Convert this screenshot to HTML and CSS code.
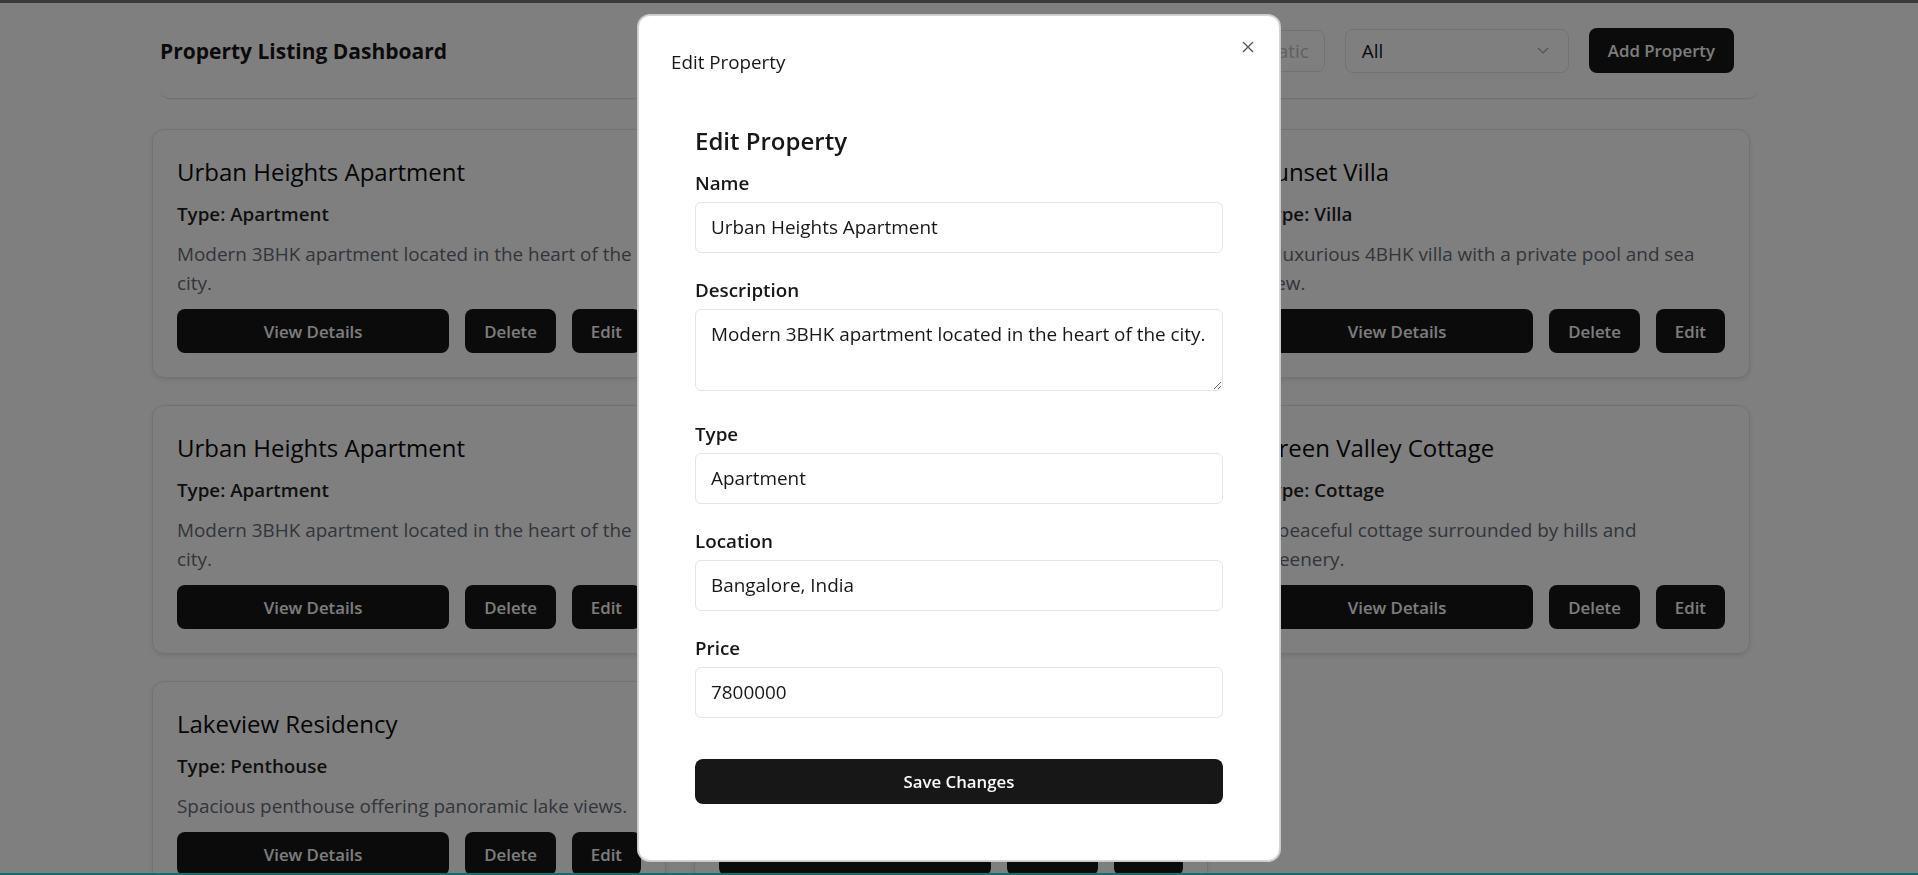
FILE: index.html
```html
<!DOCTYPE html>
<html lang="en">
<head>
<meta charset="utf-8">
<title>Property Listing Dashboard</title>
<link rel="stylesheet" href="styles.css">
</head>
<body>
<div class="page">
  <header class="header">
    <h1 class="header-title">Property Listing Dashboard</h1>
    <div class="controls">
      <input class="search" type="text" placeholder="Sort: Automatic">
      <div class="select">
        <span>All</span>
        <svg class="chevron" width="12" height="7" viewBox="0 0 12 7"><polyline points="1,1 6,6 11,1" fill="none" stroke="#a3a3a3" stroke-width="1.2"/></svg>
      </div>
      <button class="btn btn-add">Add Property</button>
    </div>
  </header>

  <main class="grid">
    <article class="card">
      <h2 class="card-title">Urban Heights Apartment</h2>
      <p class="card-type">Type: Apartment</p>
      <p class="card-desc">Modern 3BHK apartment located in the heart of the city.</p>
      <div class="card-actions"><button class="btn btn-view">View Details</button><button class="btn">Delete</button><button class="btn">Edit</button></div>
    </article>
    <article class="card">
      <h2 class="card-title">Skyline Towers</h2>
      <p class="card-type">Type: Apartment</p>
      <p class="card-desc">Premium 2BHK apartment with a stunning skyline view and modern amenities.</p>
      <div class="card-actions"><button class="btn btn-view">View Details</button><button class="btn">Delete</button><button class="btn">Edit</button></div>
    </article>
    <article class="card">
      <h2 class="card-title">Sunset Villa</h2>
      <p class="card-type">Type: Villa</p>
      <p class="card-desc">A luxurious 4BHK villa with a private pool and sea view.</p>
      <div class="card-actions"><button class="btn btn-view">View Details</button><button class="btn">Delete</button><button class="btn">Edit</button></div>
    </article>
    <article class="card">
      <h2 class="card-title">Urban Heights Apartment</h2>
      <p class="card-type">Type: Apartment</p>
      <p class="card-desc">Modern 3BHK apartment located in the heart of the city.</p>
      <div class="card-actions"><button class="btn btn-view">View Details</button><button class="btn">Delete</button><button class="btn">Edit</button></div>
    </article>
    <article class="card">
      <h2 class="card-title">Palm Grove House</h2>
      <p class="card-type">Type: House</p>
      <p class="card-desc">Independent 3BHK house with a lush garden in a quiet neighbourhood.</p>
      <div class="card-actions"><button class="btn btn-view">View Details</button><button class="btn">Delete</button><button class="btn">Edit</button></div>
    </article>
    <article class="card">
      <h2 class="card-title">Green Valley Cottage</h2>
      <p class="card-type">Type: Cottage</p>
      <p class="card-desc">A peaceful cottage surrounded by hills and<br>greenery.</p>
      <div class="card-actions"><button class="btn btn-view">View Details</button><button class="btn">Delete</button><button class="btn">Edit</button></div>
    </article>
    <article class="card">
      <h2 class="card-title">Lakeview Residency</h2>
      <p class="card-type">Type: Penthouse</p>
      <p class="card-desc">Spacious penthouse offering panoramic lake views.</p>
      <div class="card-actions"><button class="btn btn-view">View Details</button><button class="btn">Delete</button><button class="btn">Edit</button></div>
    </article>
    <article class="card">
      <h2 class="card-title">Metro Studio Loft</h2>
      <p class="card-type">Type: Studio</p>
      <p class="card-desc">Compact studio close to the metro station.</p>
      <div class="card-actions"><button class="btn btn-view">View Details</button><button class="btn">Delete</button><button class="btn">Edit</button></div>
    </article>
  </main>
</div>

<div class="overlay">
  <div class="modal" role="dialog">
    <div class="modal-header">
      <span class="modal-title">Edit Property</span>
    </div>
    <button class="modal-close" aria-label="Close">
      <svg width="12" height="12" viewBox="0 0 12 12"><path d="M1 1 L11 11 M11 1 L1 11" stroke="#525252" stroke-width="1.3" fill="none"/></svg>
    </button>
    <form class="modal-body">
      <h2 class="form-title">Edit Property</h2>
      <label class="field">
        <span class="label">Name</span>
        <input class="input" type="text" value="Urban Heights Apartment">
      </label>
      <label class="field">
        <span class="label">Description</span>
        <textarea class="input textarea">Modern 3BHK apartment located in the heart of the city.</textarea>
      </label>
      <label class="field">
        <span class="label">Type</span>
        <input class="input" type="text" value="Apartment">
      </label>
      <label class="field">
        <span class="label">Location</span>
        <input class="input" type="text" value="Bangalore, India">
      </label>
      <label class="field">
        <span class="label">Price</span>
        <input class="input" type="text" value="7800000">
      </label>
      <button type="button" class="btn btn-save">Save Changes</button>
    </form>
  </div>
</div>

<div class="top-strip"></div>
<div class="bottom-strip"></div>
</body>
</html>
```

FILE: styles.css
```css
* { box-sizing: border-box; }

html, body {
  margin: 0;
  height: 100%;
  overflow: hidden;
  background: #ffffff;
  font-family: "Open Sans", "Noto Sans", sans-serif;
  color: #171717;
}

.page {
  width: 1598px;
  margin: 0 auto;
  padding-top: 4px;
}

/* Header */
.header {
  display: flex;
  align-items: center;
  justify-content: space-between;
  padding: 24px 24px 25px 0;
  background: #fff;
  border-radius: 10px;
  box-shadow: 0 2px 2px -1px rgba(0,0,0,0.14);
}
.header-title {
  margin: 0;
  font-size: 21px;
  font-weight: 700;
  line-height: 30px;
  color: #171717;
}
.controls {
  display: flex;
  align-items: center;
  gap: 20px;
}
.search {
  width: 220px;
  height: 42px;
  border: 1px solid #e5e5e5;
  border-radius: 8px;
  padding: 0 15px;
  font: inherit;
  font-size: 18.9px;
  text-align: right;
}
.search::placeholder { color: #c2c2c2; }
.select {
  width: 224px;
  height: 44px;
  border: 1px solid #e5e5e5;
  border-radius: 8px;
  padding: 0 19px 0 16px;
  display: flex;
  align-items: center;
  justify-content: space-between;
  font-size: 18.9px;
  color: #171717;
}

/* Buttons */
.btn {
  height: 44px;
  padding: 0 19px;
  border: 0;
  border-radius: 8px;
  background: #171717;
  color: #fafafa;
  font-family: inherit;
  font-size: 16.8px;
  font-weight: 600;
  cursor: pointer;
}
.btn-add { height: 45px; }

/* Cards */
.grid {
  width: 1598px;
  margin: 31px 0 0 -8px;
  display: grid;
  grid-template-columns: repeat(3, 1fr);
  column-gap: 28px;
  row-gap: 27px;
}
.card {
  background: #fff;
  border: 1px solid #e5e5e5;
  border-radius: 12px;
  padding: 24px;
  box-shadow: 0 2px 5px rgba(0,0,0,0.10);
  display: flex;
  flex-direction: column;
}
.card-title {
  margin: 2px 0 13px;
  font-size: 24px;
  line-height: 32px;
  font-weight: 500;
  color: #0a0a0a;
}
.card-type {
  margin: 0 0 12px;
  font-size: 18.8px;
  line-height: 27px;
  font-weight: 600;
  color: #1f1f1f;
}
.card-desc {
  margin: 0 0 11px;
  font-size: 18.9px;
  line-height: 29px;
  color: #656b76;
}
.card-actions {
  display: flex;
  gap: 16px;
}
.btn-view { flex: 1; }

/* Overlay + modal */
.overlay {
  position: fixed;
  inset: 0;
  background: rgba(0,0,0,0.5);
  display: flex;
  align-items: center;
  justify-content: center;
}
.modal {
  position: relative;
  width: 642px;
  background: #fff;
  border: 1px solid #d4d4d4;
  box-shadow: 0 0 0 1px #c9c9c9;
  border-radius: 12px;
  padding: 32px;
}
.modal-header {
  margin-bottom: 24px;
}
.modal-title {
  display: block;
  font-size: 18.8px;
  line-height: 29px;
  color: #171717;
}
.modal-close {
  position: absolute;
  top: 24px;
  right: 24px;
  width: 14px;
  height: 14px;
  padding: 0;
  border: 0;
  background: none;
  display: flex;
  align-items: center;
  justify-content: center;
}
.modal-body {
  padding: 24px;
  margin: 0;
}
.form-title {
  margin: 0 0 13px;
  font-size: 24px;
  line-height: 32px;
  font-weight: 600;
  color: #171717;
}
.field {
  display: block;
  margin-bottom: 24px;
}
.label {
  display: block;
  font-size: 18.8px;
  line-height: 27px;
  font-weight: 600;
  margin-bottom: 5px;
  color: #171717;
}
.input {
  display: block;
  width: 100%;
  height: 51px;
  border: 1px solid #e5e5e5;
  border-radius: 6px;
  padding: 0 15px;
  font-family: inherit;
  font-size: 18.9px;
  color: #171717;
  background: #fff;
}
.textarea {
  height: 82px;
  padding: 11px 15px;
  line-height: 27px;
  resize: vertical;
  margin-bottom: 30px;
}
.field:has(.textarea) { margin-bottom: 0; }
.btn-save {
  display: block;
  width: 100%;
  height: 45px;
  margin-top: 41px;
}

.top-strip {
  position: fixed;
  top: 0; left: 0; right: 0;
  height: 3px;
  background: #3b3b3b;
}
.bottom-strip {
  position: fixed;
  bottom: 0; left: 0; right: 0;
  height: 2px;
  background: #127070;
}
```
